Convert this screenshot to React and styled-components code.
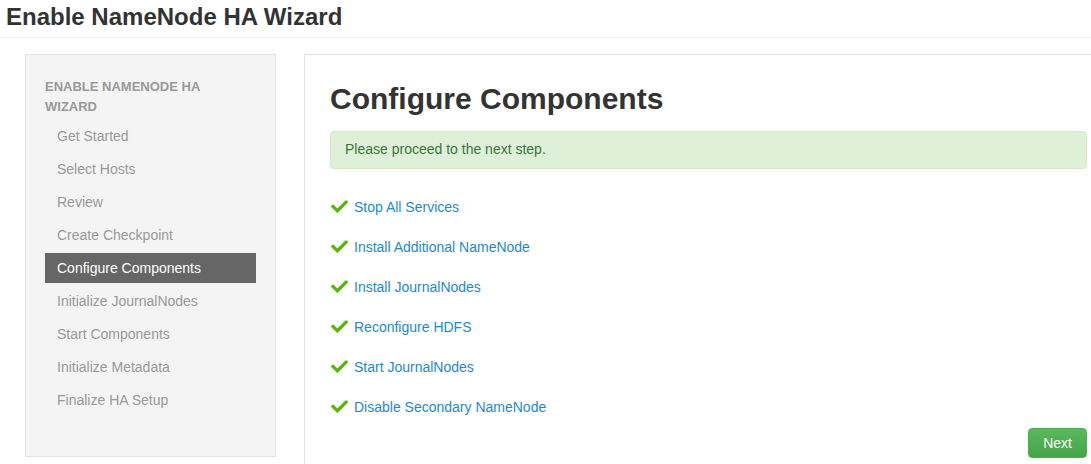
import React from "react";
import styled, { createGlobalStyle } from "styled-components";
import { FaCheck } from "react-icons/fa";

const steps = [
  "Get Started",
  "Select Hosts",
  "Review",
  "Create Checkpoint",
  "Configure Components",
  "Initialize JournalNodes",
  "Start Components",
  "Initialize Metadata",
  "Finalize HA Setup",
];

const tasks = [
  "Stop All Services",
  "Install Additional NameNode",
  "Install JournalNodes",
  "Reconfigure HDFS",
  "Start JournalNodes",
  "Disable Secondary NameNode",
];

const App = () => {
  return (
    <>
      <GlobalStyle />
      <Header>
        <Title>Enable NameNode HA Wizard</Title>
      </Header>
      <Body>
        <Sidebar>
          <SidebarTitle>Enable NameNode HA Wizard</SidebarTitle>
          <StepList>
            {steps.map((step) => (
              <Step key={step} active={step === "Configure Components"}>
                {step}
              </Step>
            ))}
          </StepList>
        </Sidebar>
        <Main>
          <Heading>Configure Components</Heading>
          <Alert>Please proceed to the next step.</Alert>
          <TaskList>
            {tasks.map((task) => (
              <Task key={task}>
                <CheckIcon />
                <TaskLink>{task}</TaskLink>
              </Task>
            ))}
          </TaskList>
          <Footer>
            <NextButton>Next</NextButton>
          </Footer>
        </Main>
      </Body>
    </>
  );
};

const GlobalStyle = createGlobalStyle`
  html, body {
    margin: 0;
    padding: 0;
    background: #fff;
    overflow: hidden;
  }
  body {
    font-family: "Liberation Sans", Arial, sans-serif;
    font-size: 14px;
    color: #333;
  }
`;

const Header = styled.div`
  height: 37px;
  padding: 0 6px;
  border-bottom: 1px solid #eee;
  display: flex;
  align-items: center;
`;

const Title = styled.h1`
  margin: 0 0 4px;
  font-size: 24px;
  font-weight: bold;
  color: #333;
  line-height: 1;
`;

const Body = styled.div`
  display: flex;
  align-items: flex-start;
  gap: 28px;
  padding: 16px 0 0 25px;
  width: 1088px;
`;

const Sidebar = styled.div`
  flex: 0 0 251px;
  box-sizing: border-box;
  background: #f4f4f4;
  border: 1px solid #e3e3e3;
  padding: 22px 19px 0;
  height: 403px;
`;

const SidebarTitle = styled.div`
  max-width: 180px;
  font-size: 13px;
  font-weight: bold;
  text-transform: uppercase;
  color: #999;
  line-height: 20px;
  margin-bottom: 4px;
`;

const StepList = styled.ul`
  list-style: none;
  margin: 0;
  padding: 0;
  display: flex;
  flex-direction: column;
  gap: 3px;
`;

const Step = styled.li`
  height: 30px;
  line-height: 30px;
  padding-left: 12px;
  font-size: 14px;
  color: ${(p) => (p.active ? "#fff" : "#999")};
  background: ${(p) => (p.active ? "#666" : "transparent")};
`;

const Main = styled.div`
  flex: 1;
  box-sizing: border-box;
  border-left: 1px solid #e3e3e3;
  border-top: 1px solid #e3e3e3;
  padding: 27px 26px 0 25px;
  min-height: 420px;
`;

const Heading = styled.h2`
  margin: 0 0 16px;
  font-size: 30px;
  font-weight: bold;
  line-height: 33px;
  color: #333;
`;

const Alert = styled.div`
  background: #dff0d8;
  border: 1px solid #d6e9c6;
  border-radius: 4px;
  color: #3c763d;
  padding: 9px 14px 10px;
  line-height: 17px;
`;

const TaskList = styled.ul`
  list-style: none;
  margin: 18px 0 0;
  padding: 0;
`;

const Task = styled.li`
  height: 40px;
  display: flex;
  align-items: center;
  padding-left: 1px;
`;

const CheckIcon = styled(FaCheck)`
  width: 17px;
  height: 17px;
  color: #5ab40c;
  margin: -2px 6px 0 0;
`;

const TaskLink = styled.a`
  color: #1e88d0;
  font-size: 14px;
  cursor: pointer;
`;

const Footer = styled.div`
  display: flex;
  justify-content: flex-end;
  margin-top: 1px;
`;

const NextButton = styled.button`
  font-family: inherit;
  font-size: 14px;
  color: #fff;
  height: 30px;
  padding: 0 14px;
  border: 1px solid #4cae4c;
  border-radius: 4px;
  background: linear-gradient(#5cb85c, #48a448);
  cursor: pointer;
`;

export default App;
